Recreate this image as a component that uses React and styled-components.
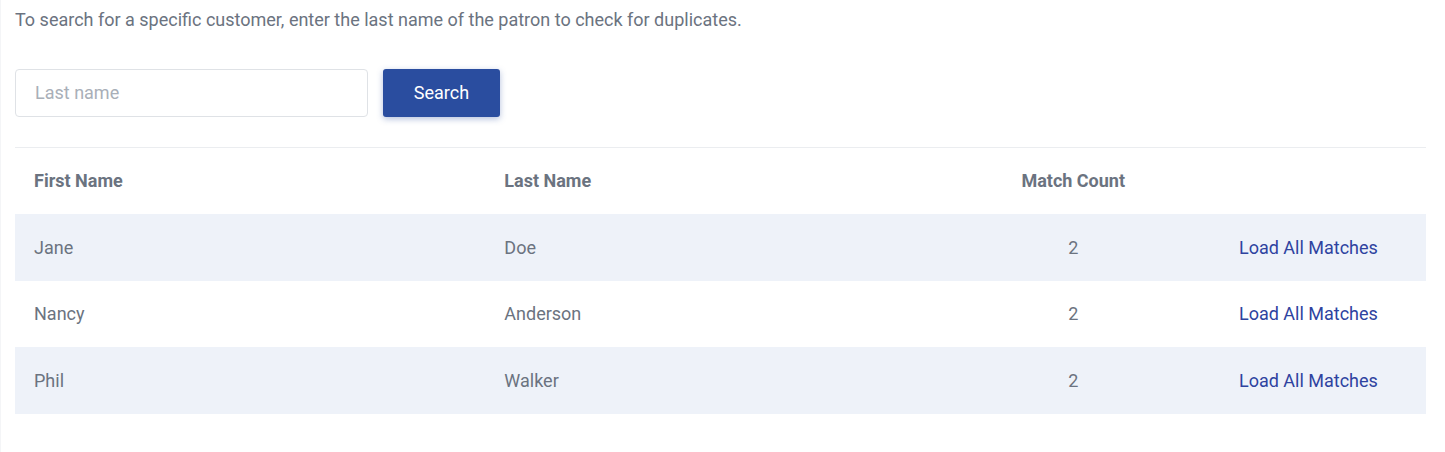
import React from "react";
import styled, { createGlobalStyle } from "styled-components";

const Global = createGlobalStyle`
  html, body { margin: 0; padding: 0; background: #fff; }
  body { font-family: Roboto, "Noto Sans", Arial, sans-serif; }
`;

const Page = styled.div`
  border-left: 1px solid #f4f5f7;
  padding: 8px 19px 30px 14px;
  min-height: 452px;
  box-sizing: border-box;
`;

const Intro = styled.p`
  margin: 0;
  font-size: 18px;
  line-height: 24px;
  color: #6b7380;
`;

const SearchBar = styled.div`
  display: flex;
  gap: 15px;
  margin-top: 37px;
  padding-bottom: 30px;
  border-bottom: 1px solid #ebedf0;
`;

const Input = styled.input`
  width: 353px;
  height: 48px;
  box-sizing: border-box;
  border: 1px solid #dfe2e6;
  border-radius: 4px;
  padding: 0 19px 2px;
  font-family: inherit;
  font-size: 18px;
  color: #6b7380;
  outline: none;
  &::placeholder { color: #a9afb8; }
`;

const Button = styled.button`
  width: 117px;
  height: 48px;
  border: none;
  border-radius: 3px;
  padding: 0 0 2px;
  background: #2a4d9f;
  color: #fff;
  font-family: inherit;
  font-size: 18px;
  font-weight: 400;
  box-shadow: 0 2px 6px rgba(42, 77, 159, 0.35);
  cursor: pointer;
`;

const Table = styled.div`
  display: grid;
  grid-template-columns: 2fr 2fr 1fr 1fr;
`;

const Row = styled.div`
  display: contents;
`;

const Cell = styled.div`
  height: ${(p) => (p.$header ? "66px" : "66.5px")};
  box-sizing: border-box;
  display: flex;
  align-items: center;
  justify-content: ${(p) => (p.$center ? "center" : "flex-start")};
  padding: ${(p) => (p.$header ? "0 19px 2px" : "0 19px")};
  background: ${(p) => (p.$striped ? "#eef2f9" : "transparent")};
  font-size: 18px;
  font-weight: ${(p) => (p.$header ? 700 : 400)};
  color: #6b7380;
`;

const Link = styled.a`
  color: #2e43a0;
  text-decoration: none;
  font-size: 18px;
  cursor: pointer;
`;

const rows = [
  { first: "Jane", last: "Doe", count: 2 },
  { first: "Nancy", last: "Anderson", count: 2 },
  { first: "Phil", last: "Walker", count: 2 },
];

export default function App() {
  return (
    <>
      <Global />
      <Page>
        <Intro>
          To search for a specific customer, enter the last name of the patron to check for duplicates.
        </Intro>
        <SearchBar>
          <Input placeholder="Last name" />
          <Button>Search</Button>
        </SearchBar>
        <Table>
          <Row>
            <Cell $header>First Name</Cell>
            <Cell $header>Last Name</Cell>
            <Cell $header $center>Match Count</Cell>
            <Cell $header />
          </Row>
          {rows.map((r, i) => {
            const s = i % 2 === 0;
            return (
              <Row key={r.first}>
                <Cell $striped={s}>{r.first}</Cell>
                <Cell $striped={s}>{r.last}</Cell>
                <Cell $striped={s} $center>{r.count}</Cell>
                <Cell $striped={s} $center>
                  <Link>Load All Matches</Link>
                </Cell>
              </Row>
            );
          })}
        </Table>
      </Page>
    </>
  );
}
